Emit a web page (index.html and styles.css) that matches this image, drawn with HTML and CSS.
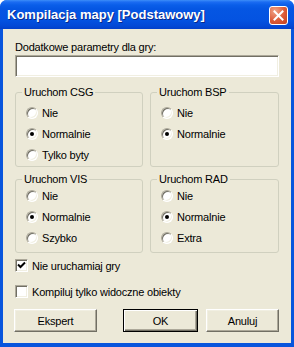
FILE: index.html
```html
<!DOCTYPE html>
<html lang="pl">
<head>
    <meta charset="UTF-8">
    <meta name="viewport" content="width=device-width, initial-scale=1.0">
    <title>Kompilacja mapy</title>
    <link rel="stylesheet" href="styles.css">
</head>
<body>
    <div class="window">
        <div class="titlebar">
            <span class="title">Kompilacja mapy [Podstawowy]</span>
            <button class="close-btn" aria-label="Zamknij">
                <svg width="11" height="11" viewBox="0 0 11 11">
                    <path d="M1.5 1.5 L9.5 9.5 M9.5 1.5 L1.5 9.5" stroke="#fff" stroke-width="2" stroke-linecap="square"/>
                </svg>
            </button>
        </div>

        <div class="client">
            <div class="field-label">Dodatkowe parametry dla gry:</div>
            <input type="text" class="edit">

            <div class="groups">
                <div class="group">
                    <span class="group-title">Uruchom CSG</span>
                    <label class="radio"><span class="radio-mark"></span>Nie</label>
                    <label class="radio"><span class="radio-mark checked"></span>Normalnie</label>
                    <label class="radio"><span class="radio-mark"></span>Tylko byty</label>
                </div>
                <div class="group">
                    <span class="group-title">Uruchom BSP</span>
                    <label class="radio"><span class="radio-mark"></span>Nie</label>
                    <label class="radio"><span class="radio-mark checked"></span>Normalnie</label>
                </div>
                <div class="group group-low">
                    <span class="group-title">Uruchom VIS</span>
                    <label class="radio"><span class="radio-mark"></span>Nie</label>
                    <label class="radio"><span class="radio-mark checked"></span>Normalnie</label>
                    <label class="radio"><span class="radio-mark"></span>Szybko</label>
                </div>
                <div class="group group-low">
                    <span class="group-title">Uruchom RAD</span>
                    <label class="radio"><span class="radio-mark"></span>Nie</label>
                    <label class="radio"><span class="radio-mark checked"></span>Normalnie</label>
                    <label class="radio"><span class="radio-mark"></span>Extra</label>
                </div>
            </div>

            <label class="check">
                <span class="check-box">
                    <svg width="9" height="9" viewBox="0 0 9 9">
                        <path d="M1 3.5 L3.5 6 L8 1.5" fill="none" stroke="#000" stroke-width="2"/>
                    </svg>
                </span>
                Nie uruchamiaj gry
            </label>
            <label class="check check-second">
                <span class="check-box"></span>
                Kompiluj tylko widoczne obiekty
            </label>

            <div class="buttons">
                <button class="btn btn-expert">Ekspert</button>
                <button class="btn btn-default">OK</button>
                <button class="btn btn-cancel">Anuluj</button>
            </div>
        </div>
    </div>
</body>
</html>
```

FILE: styles.css
```css
* {
    margin: 0;
    padding: 0;
    box-sizing: border-box;
}

body {
    width: 294px;
    height: 347px;
    background: #fff;
    font-family: 'Liberation Sans', Tahoma, Arial, sans-serif;
    font-size: 11px;
    letter-spacing: -0.2px;
    color: #000;
    overflow: hidden;
}

.window {
    width: 294px;
    height: 347px;
    display: flex;
    flex-direction: column;
    background: #0855dd;
    border-radius: 7px 7px 0 0;
    overflow: hidden;
}

/* title bar */
.titlebar {
    height: 29px;
    flex: none;
    display: flex;
    align-items: center;
    justify-content: space-between;
    padding: 0 6px 0 7px;
    background: linear-gradient(#3d8ef8 0, #1b6cf2 2px, #0a5ee9 5px, #0556e3 9px, #0453e1 20px, #0349d6 26px, #0340c9 29px);
}

.title {
    color: #fff;
    font-weight: bold;
    font-size: 13px;
    letter-spacing: 0;
    text-shadow: 1px 1px 0 #0a2a8a;
}

.close-btn {
    width: 19px;
    height: 19px;
    margin-top: 1px;
    border: 1px solid #fff;
    border-radius: 3px;
    background: radial-gradient(circle at 30% 25%, #f0a488, #dc5a37 55%, #c2401e);
    display: flex;
    align-items: center;
    justify-content: center;
}

/* client area */
.client {
    flex: 1;
    margin: 0 3px 4px;
    background: #ece9d8;
    padding: 12px 12px 0;
}

.field-label {
    line-height: 13px;
}

.edit {
    display: block;
    width: 264px;
    height: 22px;
    margin-top: 1px;
    background: #fff;
    border: 1px solid;
    border-color: #aca899 #fff #fff #aca899;
    box-shadow: inset 1px 1px 0 #716f64, inset -1px -1px 0 #f1efe2;
}

.groups {
    display: grid;
    grid-template-columns: 128px 129px;
    column-gap: 7px;
    row-gap: 12px;
    margin-top: 15px;
}

.group {
    position: relative;
    height: 75px;
    border: 1px solid #d0d0bf;
    border-radius: 3px;
    padding: 9px 0 0 10px;
}

.group-low {
    height: 74px;
    padding-top: 5px;
}

.group-title {
    position: absolute;
    top: -7px;
    left: 6px;
    padding: 0 2px;
    line-height: 13px;
    background: #ece9d8;
}

.radio {
    display: flex;
    align-items: center;
    gap: 4px;
    height: 21px;
}

.radio-mark {
    position: relative;
    width: 12px;
    height: 12px;
    border-radius: 50%;
    background: #fff;
    border: 1px solid;
    border-color: #aca899 #fff #fff #aca899;
    box-shadow: inset 1px 1px 0 #716f64, inset -1px -1px 0 #f1efe2;
}

.radio-mark.checked::after {
    content: '';
    position: absolute;
    left: 3px;
    top: 3px;
    width: 4px;
    height: 4px;
    border-radius: 50%;
    background: #000;
}

/* check boxes */
.check {
    display: flex;
    align-items: center;
    gap: 4px;
    height: 13px;
    margin-top: 6px;
}

.check-second {
    margin-top: 13px;
}

.check-box {
    width: 13px;
    height: 13px;
    display: flex;
    align-items: center;
    justify-content: center;
    background: #fff;
    border: 1px solid;
    border-color: #aca899 #fff #fff #aca899;
    box-shadow: inset 1px 1px 0 #716f64, inset -1px -1px 0 #f1efe2;
}

/* buttons */
.buttons {
    display: flex;
    margin-top: 11px;
}

.btn {
    height: 23px;
    font-family: inherit;
    font-size: 11px;
    letter-spacing: -0.2px;
    color: #000;
    background: #ece9d8;
    border: 1px solid;
    border-color: #fff #716f64 #716f64 #fff;
    box-shadow: inset -1px -1px 0 #aca899, inset 1px 1px 0 #f1efe2;
}

.btn-expert {
    width: 83px;
    margin-left: -1px;
}

.btn-default {
    width: 75px;
    margin-left: 26px;
    border: 1px solid #000;
    box-shadow: inset 1px 1px 0 #fff, inset -1px -1px 0 #716f64, inset -2px -2px 0 #aca899;
}

.btn-cancel {
    width: 73px;
    margin-left: 8px;
}
```
